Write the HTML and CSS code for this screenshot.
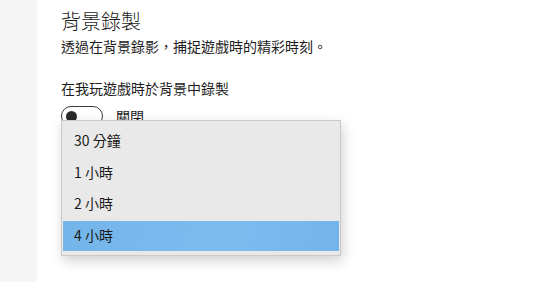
FILE: index.html
```html
<!DOCTYPE html>
<html lang="zh-Hant">
<head>
<meta charset="UTF-8">
<title>背景錄製</title>
<link rel="stylesheet" href="styles.css">
</head>
<body>
    <div class="page">
        <div class="sidebar"></div>
        <div class="content">
            <h1 class="title">背景錄製</h1>
            <p class="desc">透過在背景錄影，捕捉遊戲時的精彩時刻。</p>
            <div class="setting-label">在我玩遊戲時於背景中錄製</div>
            <div class="toggle-row">
                <div class="toggle"><span class="thumb"></span></div>
                <span class="toggle-text">關閉</span>

                <!-- open dropdown menu -->
                <ul class="menu">
                    <li class="menu-item">30 分鐘</li>
                    <li class="menu-item">1 小時</li>
                    <li class="menu-item">2 小時</li>
                    <li class="menu-item selected">4 小時</li>
                </ul>
            </div>
        </div>
    </div>
</body>
</html>
```

FILE: styles.css
```css
body {
    margin: 0;
    padding: 0;
    background-color: #fff;
    font-family: "Noto Sans CJK TC", "Noto Sans", sans-serif;
    color: #1b1b1b;
}
.page {
    display: flex;
    height: 282px;
    overflow: hidden;
}
.sidebar {
    width: 37px;
    flex-shrink: 0;
    background-color: #f5f5f5;
}
.content {
    flex: 1;
    padding-left: 24px;
}
.title {
    margin: 8px 0 0;
    font-size: 20px;
    line-height: 26px;
    font-weight: 300;
}
.desc {
    margin: 2px 0 0;
    font-size: 14px;
    line-height: 20px;
}
.setting-label {
    margin-top: 22px;
    font-size: 14px;
    line-height: 20px;
}

/* toggle */
.toggle-row {
    position: relative;
    display: flex;
    align-items: center;
    gap: 13px;
    margin-top: 8px;
    height: 20px;
}
.toggle {
    width: 42px;
    height: 20px;
    box-sizing: border-box;
    border: 1.5px solid #3a3a3a;
    border-radius: 10px;
    display: flex;
    align-items: center;
    padding-left: 4px;
}
.thumb {
    width: 11px;
    height: 11px;
    border-radius: 50%;
    background-color: #2b2b2b;
}
.toggle-text {
    font-size: 14px;
}

/* dropdown */
.menu {
    position: absolute;
    top: 14px;
    left: 0;
    width: 280px;
    box-sizing: border-box;
    margin: 0;
    padding: 5px 1px 4px;
    list-style: none;
    background-color: #e9e9e9;
    border: 1px solid #c9c9c9;
    box-shadow: 2px 5px 12px rgba(0, 0, 0, 0.18);
}
.menu-item {
    height: 30px;
    line-height: 29px;
    margin-bottom: 1.5px;
    padding-left: 11px;
    font-size: 14px;
}
.menu-item:last-child {
    margin-bottom: 0;
}
.menu-item.selected {
    background: linear-gradient(100deg, #74b5ea, #7cbbee 60%, #74b4ea);
}
```
